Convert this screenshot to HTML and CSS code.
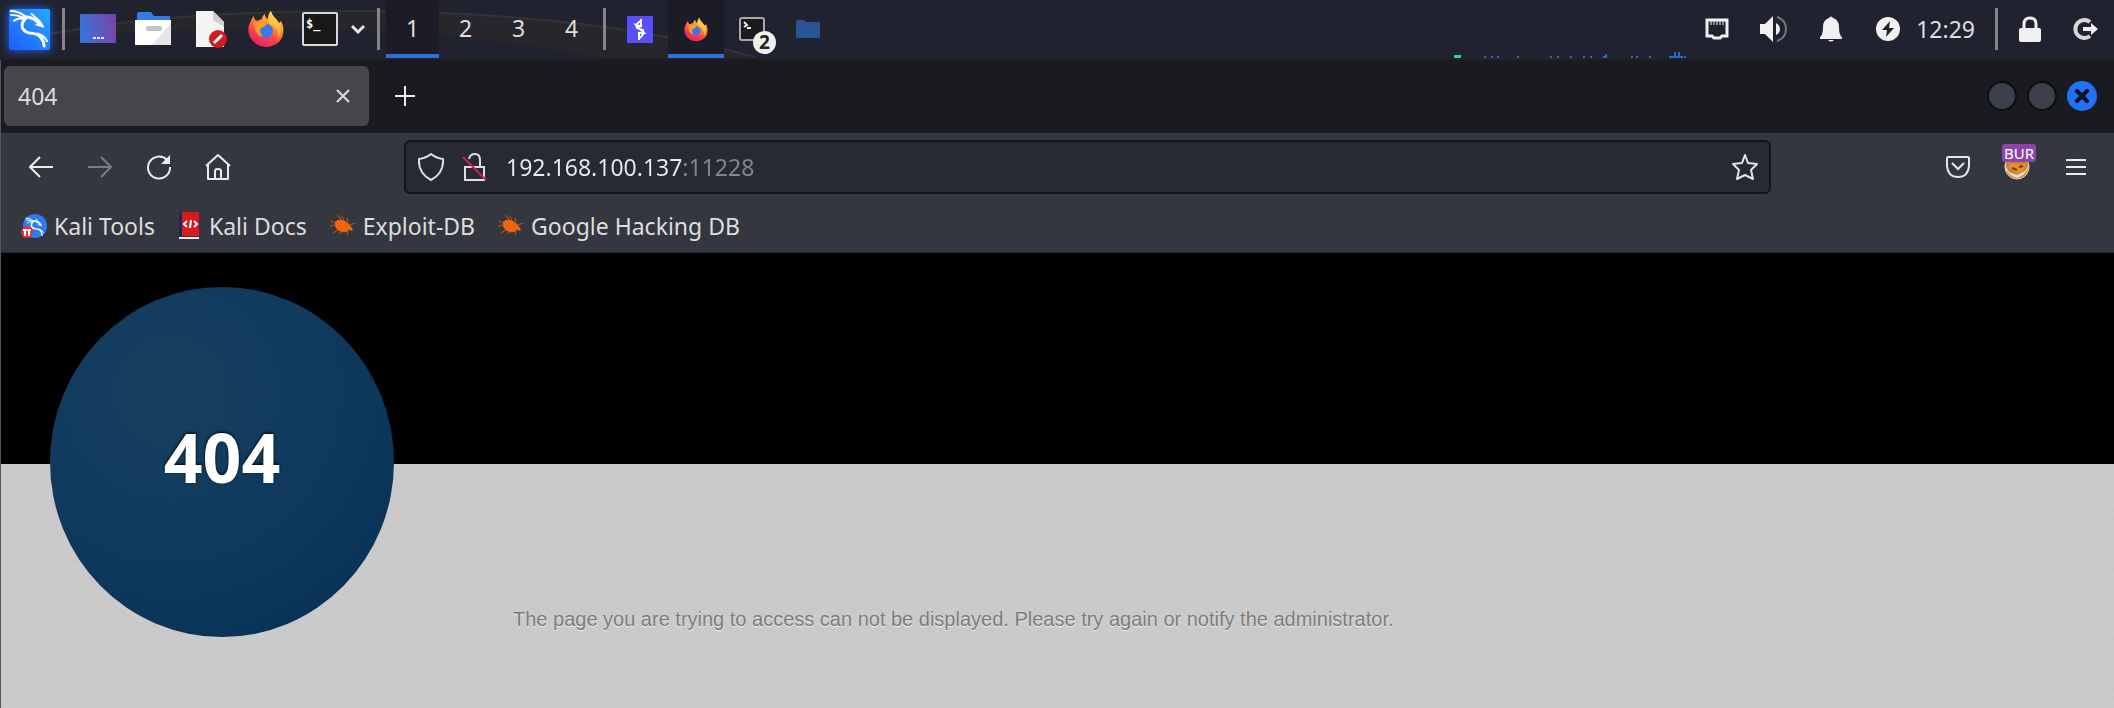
FILE: index.html
```
<!DOCTYPE html>
<html lang="en">
<head>
    <meta charset="utf-8" />
    <title>404</title>
    <link rel="stylesheet" href="styles.css">
</head>
<body>
    <!-- shared gradients and symbols -->
    <svg class="defs" width="0" height="0" aria-hidden="true">
        <defs>
            <linearGradient id="kaliblue" x1="0" y1="1" x2="1" y2="0"><stop offset="0" stop-color="#1f5cff" /><stop offset="1" stop-color="#26a8ff" /></linearGradient>
            <linearGradient id="desk" x1="0" y1="0.6" x2="1" y2="0.4"><stop offset="0" stop-color="#3673e0" /><stop offset="1" stop-color="#7a44a8" /></linearGradient>
            <linearGradient id="foxfire" x1="0.8" y1="0" x2="0.3" y2="1"><stop offset="0" stop-color="#ffdc4a" /><stop offset="0.4" stop-color="#ff9030" /><stop offset="0.7" stop-color="#fb4048" /><stop offset="1" stop-color="#e0206a" /></linearGradient>
        </defs>
        <symbol id="firefox" viewBox="0 0 36 38">
            <path fill="url(#foxfire)" d="M3 11 C4 8 5 7 6 6 C6 9 7 10 9 11 C11 10 13 9 14 9 C14 7 15 5 17 4 C17 7 18 8 20 9 C20 5 21 3 23 1 C24 6 29 9 31 13 L33 11 C37 18 36 27 31 32 C25 38 13 39 6 32 C-1 26 -1 17 3 11Z" />
            <path fill="#ffd04a" d="M23 1 C24 6 29 9 31 13 C33 18 33 23 30 28 C31 21 28 16 22 14 C19 11 20 5 23 1Z" opacity="0.75" />
            <circle cx="18" cy="21" r="7" fill="#3c78e8" />
            <path fill="#ff9a2c" d="M6 13 C9 11 13 12 18 14 C18 17 14 17 12 19 C12 22 13 25 15 27 C10 26 7 22 7 18Z" />
        </symbol>
        <symbol id="dragon" viewBox="0 0 42 42">
            <g fill="none" stroke="#fff" stroke-linecap="round" stroke-linejoin="round">
                <path stroke-width="2" d="M2 2 Q9 2 16 7 M2 6 Q9 6 15 9 M5 12 Q9 9 16 10" />
                <path stroke-width="3" d="M16 8 Q25 8 32 16 M17 10 Q12 14 14 20 Q17 25 25 25 Q35 27 36 38" />
                <path stroke-width="2" d="M23 5 L31 12 L35 18 L28 16 M29 25 Q36 27 39 33" />
            </g>
        </symbol>
        <symbol id="bug" viewBox="0 0 26 24">
            <path fill="#ee6410" d="M5 8 Q9 4 15 7 Q21 10 23 17 L19 16 Q16 20 9 17 Q4 14 5 8Z" />
            <path fill="none" stroke="#c85412" stroke-width="1" d="M6 9 L1 7 M6 11 L0 12 M9 15 L3 19 M13 17 L9 20 M18 16 L17 21 M11 6 L8 1 M14 7 L12 2 M18 8 L17 4 M20 11 L25 9" />
        </symbol>
    </svg>

    <header class="panel">
        <svg class="wallpaper" viewBox="0 0 800 58" width="800" height="58" aria-hidden="true">
            <path fill="#26262b" d="M40 36 Q170 10 370 11 Q600 14 755 57 L600 57 Q450 32 370 31 Q200 26 40 36Z" />
            <path fill="none" stroke="#333238" stroke-width="2" d="M40 36 Q170 10 370 11 Q600 14 755 57" />
        </svg>
        <button class="kali" aria-label="Applications"><svg width="41" height="41" viewBox="0 0 42 42"><path fill="url(#kaliblue)" d="M0 0H42V42H0Z" /><use href="#dragon" /></svg></button>
        <span class="bar"></span>
        <div class="launchers">
            <button aria-label="Show Desktop"><svg width="38" height="42"><rect x="1" y="6" width="36" height="29" rx="1" fill="url(#desk)" /><path stroke="#e8e8ff" stroke-width="2" stroke-dasharray="3 1" d="M14 30H25" /></svg></button>
            <button aria-label="File Manager"><svg width="38" height="42"><path fill="#3679e6" d="M3 18V6Q3 4 5 4H17L20 8H36V18Z" /><path fill="#fff" d="M1 12H37V37H1Z" /><path fill="#e6e6e6" d="M37 15V37H18Z" /><rect x="12" y="18" width="16" height="5" rx="2" fill="#c6c4c2" /></svg></button>
            <button aria-label="Text Editor"><svg width="38" height="42"><path fill="#f4f4f4" d="M7 3H24L35 14V39H7Z" /><path fill="#cfcfcf" d="M24 3L35 14V19L24 12Z" /><circle cx="29" cy="31" r="9" fill="#cf1b22" /><path stroke="#fff" stroke-width="3" d="M25 35L33 27" /></svg></button>
            <button class="fox" aria-label="Firefox"><svg width="36" height="38"><use href="#firefox" /></svg></button>
            <button aria-label="Terminal"><svg width="38" height="42"><rect x="2" y="5" width="34" height="32" rx="1" fill="#181818" stroke="#d8d8d8" stroke-width="2" /><text class="prompt" x="5" y="20">$_</text></svg></button>
        </div>
        <button class="more" aria-label="More terminals"><svg width="14" height="10"><path fill="none" stroke="#e6e6e6" stroke-width="3" d="M1 2L7 8L13 2" /></svg></button>
        <span class="bar"></span>
        <nav class="workspaces">
            <button class="active">1</button>
            <button>2</button>
            <button>3</button>
            <button>4</button>
        </nav>
        <span class="bar"></span>
        <div class="tasks">
            <button aria-label="Burp Suite"><svg width="26" height="27"><rect width="26" height="27" fill="#5b4ffa" /><path fill="none" stroke="#fff" stroke-width="2" d="M14 3V10L9 9L17 17L12 17V24M13 5L9 9L10 12L14 13M13 22L17 17L16 14L12 13" /></svg></button>
            <button class="active" aria-label="Firefox"><svg width="24" height="25"><use href="#firefox" /></svg></button>
            <button class="grouped" aria-label="Terminal windows"><svg width="26" height="24"><rect x="1" y="1" width="24" height="22" rx="2" fill="#1b1b1b" stroke="#aaa" stroke-width="2" /><path fill="none" stroke="#eee" stroke-width="2" d="M5 5L8 8L5 10M8 11H12" /></svg><span class="count">2</span></button>
            <button aria-label="Files"><svg width="24" height="18"><path fill="#27518f" d="M0 2Q0 0 2 0H8L10 2H24V18H0Z" /><path fill="#2a5498" d="M0 5H24V18H0Z" /></svg></button>
        </div>
        <!-- network and cpu graph -->
        <svg class="graph" width="232" height="6" aria-hidden="true">
            <path fill="#2fcfb0" d="M0 3H7V6H0Z" />
            <path fill="#2f66c8" d="M30 4h2v2h-2zM37 4h2v2h-2zM43 4h2v2h-2zM63 4h2v2h-2zM96 4h2v2h-2zM103 4h2v2h-2zM116 4h2v2h-2zM129 4h2v2h-2zM136 4h2v2h-2zM149 4h2v-2h2v4h-4zM177 4h2v2h-2zM182 4h2v2h-2zM195 4h2v2h-2zM215 4h5V0h2v4h2V0h2v4h3v2h-14zM230 4h2v2h-2z" />
        </svg>
        <div class="tray">
            <button aria-label="Network"><svg width="24" height="22"><path fill="none" stroke="#f0f0f0" stroke-width="3" d="M2 2H22V18H17L15 20H9L7 18H2Z" /><path stroke="#f0f0f0" stroke-width="1" d="M6 3V7M9 3V7M12 3V7M15 3V7M18 3V7" /></svg></button>
            <button aria-label="Volume"><svg width="28" height="28"><path fill="#f0f0f0" d="M0 9H5L13 1V27L5 19H0ZM16 8Q20 10 20 14Q20 18 16 20Z" /><path fill="none" stroke="#77777c" stroke-width="2" d="M17 2Q26 5 26 14Q26 23 17 26" /></svg></button>
            <button aria-label="Notifications"><svg width="24" height="28"><path fill="#f0f0f0" d="M1 22Q4 20 4 12Q4 5 10 3Q12 0 14 3Q20 5 20 12Q20 20 23 22V24H1ZM9 25H15Q12 28 9 25Z" /></svg></button>
            <button aria-label="Power"><svg width="24" height="24"><circle cx="12" cy="12" r="12" fill="#f0f0f0" /><path fill="#20212e" d="M14 4L6 13H11L10 20L18 11H13Z" /></svg></button>
        </div>
        <time class="clock">12:29</time>
        <span class="bar"></span>
        <div class="session">
            <button aria-label="Lock"><svg width="22" height="26"><path fill="none" stroke="#f0f0f0" stroke-width="3" d="M5 13V8Q5 2 11 2Q17 2 17 8V13" /><rect y="12" width="22" height="14" rx="2" fill="#f0f0f0" /></svg></button>
            <button aria-label="Log out"><svg width="26" height="24"><path fill="none" stroke="#d8d8d8" stroke-width="4" d="M17 5A9 9 0 1 0 17 19" /><path fill="#f0f0f0" d="M10 10H18V6L25 12L18 18V14H10Z" /></svg></button>
        </div>
    </header>

    <div class="browser">
        <div class="tabstrip">
            <div class="tab">
                <span>404</span>
                <button aria-label="Close tab"><svg width="14" height="14"><path stroke="#dedede" stroke-width="2" d="M1 1L13 13M13 1L1 13" /></svg></button>
            </div>
            <button class="newtab" aria-label="New tab"><svg width="20" height="20"><path stroke="#eee" stroke-width="2" d="M10 0V20M0 10H20" /></svg></button>
            <div class="controls">
                <button aria-label="Minimize"></button>
                <button aria-label="Maximize"></button>
                <button class="close" aria-label="Close"><svg width="14" height="14"><path stroke="#0c1020" stroke-width="4" stroke-linecap="round" d="M2 2L12 12M12 2L2 12" /></svg></button>
            </div>
        </div>

        <div class="toolbar">
            <button aria-label="Back"><svg width="24" height="22"><path fill="none" stroke="#ececec" stroke-width="2" d="M24 11H2M11 1L1 11L11 21" /></svg></button>
            <button aria-label="Forward"><svg width="24" height="22"><path fill="none" stroke="#7b7d83" stroke-width="2" d="M0 11H22M13 1L23 11L13 21" /></svg></button>
            <button aria-label="Reload"><svg width="26" height="26"><path fill="none" stroke="#ececec" stroke-width="2" d="M21 6A11 11 0 1 0 24 13" /><path fill="#ececec" d="M24 1V10H15Z" /></svg></button>
            <button aria-label="Home"><svg width="26" height="28"><path fill="none" stroke="#ececec" stroke-width="2" stroke-linejoin="round" d="M1 13L13 2L25 13M3 12V26H23V12M10 26V18Q10 16 13 16Q16 16 16 18V26" /></svg></button>
            <span class="spring"></span>
            <div class="urlbar">
                <svg width="26" height="28"><path fill="none" stroke="#e0e0e0" stroke-width="2" stroke-linejoin="round" d="M13 1Q18 5 25 6Q26 20 13 27Q0 20 1 6Q8 5 13 1Z" /></svg>
                <svg width="26" height="28"><path fill="none" stroke="#dedede" stroke-width="2" d="M7 6Q8 1 13 1Q18 1 18 7V13M3 14H22V27H3Z" /><path stroke="#d0204c" stroke-width="2" d="M1 4L24 27" /></svg>
                <input type="text" value="192.168.100.137:11228" aria-label="Address">
                <button aria-label="Bookmark this page"><svg width="28" height="28"><path fill="none" stroke="#e4e4e4" stroke-width="2" stroke-linejoin="round" d="M14 2L17 10L26 11L20 17L22 26L14 22L6 26L8 17L2 11L11 10Z" /></svg></button>
            </div>
            <span class="spring"></span>
            <button aria-label="Save to Pocket"><svg width="26" height="24"><path fill="none" stroke="#e6e6e6" stroke-width="2" d="M3 2H23Q24 2 24 4V11Q23 22 13 22Q3 22 2 11V4Q2 2 3 2Z" /><path fill="none" stroke="#e6e6e6" stroke-width="2" d="M7 8L13 14L19 8" /></svg></button>
            <button class="proxy" aria-label="FoxyProxy"><svg width="28" height="28"><circle cx="14" cy="14" r="12" fill="#c9823e" stroke="#ead9bd" stroke-width="1" /><path fill="#e8dfce" d="M1 11Q3 22 14 25Q23 23 26 12L22 18L14 22L6 19Z" /><path fill="#f08c22" d="M6 11H23L20 18L13 20L7 16Z" /><path stroke="#55402e" stroke-width="2" d="M9 15L14 17M16 14L20 13" /></svg><span class="badge">BUR</span></button>
            <button aria-label="Menu"><svg width="20" height="18"><path stroke="#ececec" stroke-width="2" d="M0 2H20M0 9H20M0 16H20" /></svg></button>
        </div>

        <nav class="bookmarks">
            <a href="#"><svg width="26" height="26"><circle cx="14" cy="13" r="12" fill="#2f7df2" /><svg x="3" y="4" width="22" height="20"><use href="#dragon" /></svg><circle cx="6" cy="19" r="6" fill="#e83036" /><path fill="none" stroke="#fff" stroke-width="2" d="M2 17H10M4 17V23M8 17V23" /></svg>Kali Tools</a>
            <a href="#"><svg width="24" height="28"><path fill="#20245c" d="M1 1H4V24H1Z" /><path fill="#d61a1e" d="M4 0H21V24H4Z" /><path fill="#e8e8e8" d="M1 25H21V27H1Z" /><path fill="none" stroke="#fff" stroke-width="2" d="M9 9L6 12L9 15M16 9L19 12L16 15M13 8L12 16" /></svg>Kali Docs</a>
            <a href="#"><svg width="26" height="24"><use href="#bug" /></svg>Exploit-DB</a>
            <a href="#"><svg width="26" height="24"><use href="#bug" /></svg>Google Hacking DB</a>
        </nav>

        <main class="page">
            <div class="circle"><h1>404</h1></div>
            <p>The page you are trying to access can not be displayed. Please try again or notify the administrator.</p>
        </main>
    </div>
</body>
</html>
```
FILE: styles.css
```
*{
    box-sizing:border-box;
}
body{
    margin:0;
    min-height:100vh;
    display:flex;
    flex-direction:column;
    background-color:#1a1b21;
    color:#dedede;
    font:23px "Noto Sans", sans-serif;
}
button{
    display:flex;
    align-items:center;
    justify-content:center;
    flex-shrink:0;
    padding:0;
    border:0;
    background:none;
    color:inherit;
    font:inherit;
}
svg{
    display:block;
    flex-shrink:0;
}
.defs{
    position:absolute;
}

/* desktop panel */
.panel{
    position:relative;
    display:flex;
    align-items:center;
    height:60px;
    padding:0 0 0 9px;
    background-color:#212230;
    border-bottom:2px solid #202126;
}
.panel > *{
    position:relative;
}
.panel .wallpaper{
    position:absolute;
    left:0;
    top:0;
}
.kali svg{
    border-radius:2px;
    box-shadow:0 0 8px #1f6cff;
}
.bar{
    width:3px;
    height:42px;
    background-color:#858589;
}
.kali + .bar{
    margin:0 14px 0 12px;
}
.launchers{
    display:flex;
    gap:17px;
}
.launchers button{
    width:38px;
}
.launchers .fox{
    width:40px;
    padding-left:4px;
}
.prompt{
    fill:#fff;
    font:bold 12px "DejaVu Sans Mono", monospace;
}
.more{
    width:38px;
}
.workspaces,.tasks{
    display:flex;
    height:58px;
    margin:0 5px 0 6px;
}
.workspaces button{
    width:53px;
    height:58px;
    border-bottom:4px solid transparent;
    padding-top:2px;
}
.tasks button{
    width:56px;
    height:58px;
    border-bottom:4px solid transparent;
    padding-top:4px;
}
.panel .active{
    background-color:#1b1c25;
    border-bottom-color:#2f70dc;
}
.grouped{
    position:relative;
}
.count{
    position:absolute;
    right:4px;
    bottom:0;
    width:23px;
    height:23px;
    border-radius:50%;
    background-color:#f0f0ee;
    color:#222;
    font:bold 19px/23px "Noto Sans", sans-serif;
}
.graph{
    align-self:flex-end;
    margin-left:auto;
}
.tray{
    display:flex;
    margin-left:2px;
}
.tray button{
    width:57px;
}
.clock{
    margin:0 20px 0 0;
}
.session{
    display:flex;
    margin-left:4px;
}
.session button{
    width:56px;
}

/* browser window */
.browser{
    flex:1;
    display:flex;
    flex-direction:column;
    border-left:1px solid #55565a;
}
.tabstrip{
    display:flex;
    align-items:center;
    height:73px;
    padding:0 17px 1px 3px;
}
.tab{
    display:flex;
    align-items:center;
    justify-content:space-between;
    width:365px;
    height:60px;
    padding:0 19px 0 14px;
    border-radius:6px;
    background-color:#45464b;
}
.newtab{
    width:72px;
    height:60px;
}
.controls{
    display:flex;
    gap:10px;
    margin-left:auto;
}
.controls button{
    width:30px;
    height:30px;
    border-radius:50%;
    border:2px solid #0c0d10;
    background-color:#3b3f4b;
}
.controls .close{
    border:0;
    background-color:#2470f4;
}
.toolbar{
    display:flex;
    align-items:center;
    height:68px;
    padding:0 9px 2px 10px;
    background-color:#353740;
    border-top:1px solid #3b3d46;
}
.toolbar > button{
    width:59px;
    height:54px;
}
.spring{
    flex:0 1 157px;
}
.urlbar{
    flex:1;
    display:flex;
    align-items:center;
    gap:18px;
    height:54px;
    padding:0 10px 0 12px;
    border:2px solid #14151b;
    border-radius:6px;
    background-color:#272935;
}
/* the host stands out, the port is dimmed */
.urlbar input{
    flex:1;
    min-width:0;
    padding:0;
    border:0;
    outline:none;
    font:inherit;
    color:#ececec;
    background:linear-gradient(to right, #ececec 176px, #85868d 176px);
    -webkit-background-clip:text;
    background-clip:text;
    -webkit-text-fill-color:transparent;
}
.proxy{
    position:relative;
}
.badge{
    position:absolute;
    left:15px;
    top:4px;
    width:34px;
    height:18px;
    border-radius:3px;
    background-color:#8e44ad;
    color:#fff;
    font-size:15px;
    line-height:18px;
    text-align:center;
}
.bookmarks{
    display:flex;
    align-items:center;
    gap:23px;
    height:52px;
    padding:0 20px 2px;
    background-color:#353740;
    border-bottom:1px solid #24252b;
}
.bookmarks a{
    display:flex;
    align-items:center;
    gap:7px;
    color:inherit;
    text-decoration:none;
    white-space:nowrap;
}

/* error page */
.page{
    flex:1;
    display:flex;
    align-items:flex-start;
    gap:119px;
    padding:34px 49px 0;
    background:linear-gradient(#000 211px, transparent 211px), repeating-linear-gradient(35deg, #c9c9c9 0 3px, #cbcbcb 4px 7px);
}
.circle{
    display:flex;
    align-items:center;
    justify-content:center;
    flex-shrink:0;
    width:344px;
    height:350px;
    padding-bottom:10px;
    border-radius:50%;
    background:radial-gradient(circle at 35% 30%, #17405f, #103a5e 45%, #052e54 100%);
}
.circle h1{
    margin:0;
    color:#fff;
    font-size:68px;
    line-height:80px;
    text-shadow:0 -1px 3px #000;
}
.page p{
    margin:320px 0 0;
    color:#7c7c7c;
    font:20px/24px "Liberation Sans", sans-serif;
    text-shadow:0 1px 1px #eee;
}
```
